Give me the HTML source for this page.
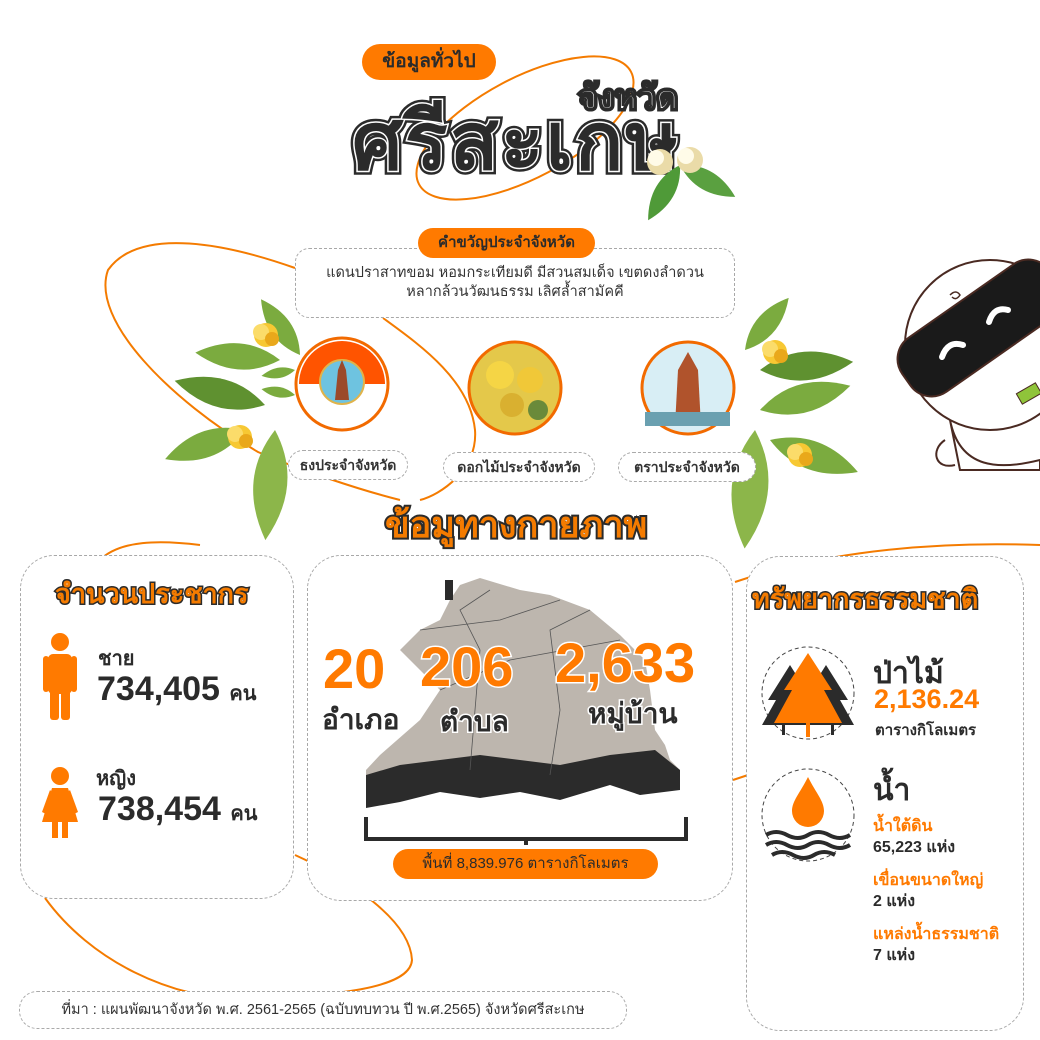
<!DOCTYPE html>
<html><head><meta charset="utf-8">
<style>
*{margin:0;padding:0;box-sizing:border-box}
body{width:1040px;height:1040px;background:#fff;position:relative;overflow:hidden;font-family:"Liberation Sans","Noto Sans CJK SC",sans-serif;color:#2b2b2b}
.a{position:absolute}
.card{position:absolute;border:1.5px dashed #a8a8a8;border-radius:34px;background:#fff}
.pill{position:absolute;border-radius:20px;text-align:center;white-space:nowrap}
.lbl{position:absolute;border:1.5px dashed #aaa;border-radius:16px;background:#fff;text-align:center;font-size:14px;line-height:28px;font-weight:bold;color:#333;white-space:nowrap}
.out{font-weight:bold;color:#f47b00;-webkit-text-stroke:2px #2b2b2b;paint-order:stroke fill;white-space:nowrap}
.dk{font-weight:bold;color:#2b2b2b;white-space:nowrap}
.big{font-weight:bold;color:#ff7a00;-webkit-text-stroke:3px #fff;paint-order:stroke fill;white-space:nowrap}
</style></head><body>

<svg class="a" style="left:0;top:0" width="1040" height="1040">
 <g fill="none" stroke="#f47b00" stroke-width="2">
  <ellipse cx="525" cy="128" rx="120" ry="50" transform="rotate(-28 525 128)"/>
  <path d="M295 268 C230 245 140 225 108 270 C90 320 170 400 258 452 C300 470 360 490 400 500"/>
  <path d="M383 318 C420 345 470 380 475 430 C478 470 440 495 420 500"/>
  <path d="M45 898 C90 960 170 1000 250 1000 C330 995 410 990 412 960 C410 920 350 880 295 855"/>
  <path d="M735 582 C800 560 900 540 1040 545"/>
  <path d="M733 780 L748 775"/>
  <path d="M100 560 C120 540 160 540 200 545"/>
 </g>
</svg>

<!-- title -->
<div class="pill" style="left:362px;top:44px;width:134px;height:36px;background:#ff7a00;font-size:19px;line-height:36px;font-weight:bold;color:#2b2b2b">ข้อมูลทั่วไป</div>
<div class="a" style="left:578px;top:70px;font-size:34px;font-weight:bold;color:#2b2b2b;-webkit-text-stroke:4px #2b2b2b;white-space:nowrap">จังหวัด</div>
<div class="a" style="left:578px;top:70px;font-size:34px;font-weight:bold;color:#fff;-webkit-text-stroke:1px #2b2b2b;white-space:nowrap">จังหวัด</div>
<div class="a" style="left:352px;top:78px;font-size:80px;font-weight:bold;color:#2b2b2b;-webkit-text-stroke:8px #2b2b2b;white-space:nowrap;letter-spacing:2px">ศรีสะเกษ</div>
<div class="a" style="left:352px;top:78px;font-size:80px;font-weight:bold;color:#2b2b2b;-webkit-text-stroke:3px #fff;paint-order:stroke fill;white-space:nowrap;letter-spacing:2px">ศรีสะเกษ</div>

<svg class="a" style="left:0;top:0" width="1040" height="1040">
 <defs>
  <path id="lf" d="M0 0 Q40 -26 85 0 Q40 26 0 0Z"/>
  <g id="fl"><circle r="12" fill="#f7c833"/><circle cx="-5" cy="-3" r="8" fill="#fbdc6a"/><circle cx="6" cy="4" r="7" fill="#e9a81b"/></g>
  <g id="wf"><circle r="13" fill="#eadba8"/><circle cx="-4" cy="-4" r="8" fill="#fffbe8"/></g>
 </defs>
 <!-- title leaves -->
 <use href="#lf" transform="translate(680 165) rotate(120) scale(0.75)" fill="#4f9a38"/>
 <use href="#lf" transform="translate(680 165) rotate(30) scale(0.75)" fill="#5aa040"/>
 <use href="#wf" transform="translate(660 162)"/><use href="#wf" transform="translate(690 160)"/>
 <!-- left cluster -->
 <g fill="#7bab3f">
  <use href="#lf" transform="translate(300 355) rotate(-125) scale(0.8)"/>
  <use href="#lf" transform="translate(280 360) rotate(185) scale(1.0)"/>
  <use href="#lf" transform="translate(265 405) rotate(195) scale(1.1)" fill="#5f9130"/>
  <use href="#lf" transform="translate(245 430) rotate(160) scale(1.0)"/>
  <use href="#lf" transform="translate(275 430) rotate(95) scale(1.3)" fill="#8cb64a"/>
  <use href="#lf" transform="translate(295 370) rotate(170) scale(0.4)"/>
  <use href="#lf" transform="translate(295 395) rotate(190) scale(0.4)"/>
 </g>
 <use href="#fl" transform="translate(266 335)"/><use href="#fl" transform="translate(240 437)"/>
 <!-- right cluster -->
 <g fill="#7bab3f">
  <use href="#lf" transform="translate(745 350) rotate(-50) scale(0.8)"/>
  <use href="#lf" transform="translate(760 370) rotate(-5) scale(1.1)" fill="#5f9130"/>
  <use href="#lf" transform="translate(760 410) rotate(-15) scale(1.1)"/>
  <use href="#lf" transform="translate(770 440) rotate(20) scale(1.1)"/>
  <use href="#lf" transform="translate(755 430) rotate(95) scale(1.4)" fill="#8cb64a"/>
 </g>
 <use href="#fl" transform="translate(775 352)"/><use href="#fl" transform="translate(800 455)"/>
 <!-- robot -->
 <g stroke="#4a2a22" stroke-width="2" fill="#fff">
  <path d="M950 420 C960 470 1000 470 1040 460 L1040 470 L960 470Z"/>
  <circle cx="990" cy="345" r="85"/>
  <path d="M945 440 C930 450 935 470 955 465"/>
  <rect x="890" y="295" width="180" height="66" rx="26" fill="#1a1a1a" transform="rotate(-35 980 328)"/>
 </g>
 <g stroke="#fff" stroke-width="6" fill="none" stroke-linecap="round">
  <path d="M942 357 Q948 340 963 345"/><path d="M989 322 Q994 306 1008 310"/>
 </g>
 <path d="M950 295 q6 -6 10 0 q-4 6 -8 2" fill="none" stroke="#4a2a22" stroke-width="1.5"/>
 <rect x="1018" y="388" width="22" height="12" fill="#8fc43a" stroke="#4a2a22" transform="rotate(-30 1028 394)"/>
</svg>

<!-- motto -->
<div class="pill" style="left:418px;top:228px;width:177px;height:30px;background:#ff7a00;font-size:15px;line-height:30px;font-weight:bold;color:#2b2b2b;z-index:2">คำขวัญประจำจังหวัด</div>
<div class="card" style="left:295px;top:248px;width:440px;height:70px;border-radius:14px;text-align:center;font-size:14.5px;line-height:19px;padding-top:15px;color:#333">แดนปราสาทขอม หอมกระเทียมดี มีสวนสมเด็จ เขตดงลำดวน<br>หลากล้วนวัฒนธรรม เลิศล้ำสามัคคี</div>

<svg class="a" style="left:290px;top:330px" width="460" height="110">
 <circle cx="52" cy="54" r="46" fill="#fff" stroke="#f26a00" stroke-width="3"/>
 <path d="M9 54 A43 43 0 0 1 95 54Z" fill="#ff5400"/>
 <circle cx="52" cy="52" r="22" fill="#6ec3e0" stroke="#e0b34a" stroke-width="2"/>
 <path d="M45 70 L48 40 L52 30 L56 40 L59 70Z" fill="#9b4a2a"/>
 <circle cx="225" cy="58" r="46" fill="#e4c84a" stroke="#f26a00" stroke-width="3"/>
 <circle cx="210" cy="45" r="14" fill="#f5d545"/><circle cx="240" cy="50" r="13" fill="#f0c838"/><circle cx="222" cy="75" r="12" fill="#d9b030"/><circle cx="248" cy="80" r="10" fill="#6a8a3a"/>
 <circle cx="398" cy="58" r="46" fill="#d8eef5" stroke="#f26a00" stroke-width="3"/>
 <path d="M385 96 L388 40 L398 22 L408 40 L411 96Z" fill="#b0532c"/>
 <path d="M355 82 L440 82 L440 96 L355 96Z" fill="#6aa0b0"/>
</svg>
<div class="lbl" style="left:288px;top:450px;width:120px">ธงประจำจังหวัด</div>
<div class="lbl" style="left:443px;top:452px;width:152px">ดอกไม้ประจำจังหวัด</div>
<div class="lbl" style="left:618px;top:452px;width:138px">ตราประจำจังหวัด</div>

<div class="a out" style="left:385px;top:496px;font-size:36px;-webkit-text-stroke:4px #2b2b2b">ข้อมูทางกายภาพ</div>

<!-- left card -->
<div class="card" style="left:20px;top:555px;width:274px;height:344px"></div>
<div class="a out" style="left:55px;top:572px;font-size:27px;-webkit-text-stroke:3px #2b2b2b">จำนวนประชากร</div>
<svg class="a" style="left:40px;top:632px" width="40" height="210">
 <g fill="#ff7a00">
  <circle cx="20" cy="10" r="9"/><rect x="8" y="22" width="24" height="40" rx="5"/><rect x="3" y="24" width="6" height="36" rx="3"/><rect x="31" y="24" width="6" height="36" rx="3"/><rect x="10" y="58" width="9" height="30" rx="3"/><rect x="21" y="58" width="9" height="30" rx="3"/>
  <circle cx="20" cy="144" r="9"/><path d="M12 156 L28 156 L38 190 L2 190Z"/><path d="M10 158 L2 180 L6 182 L14 162Z"/><path d="M30 158 L38 180 L34 182 L26 162Z"/><rect x="12" y="188" width="6" height="18"/><rect x="22" y="188" width="6" height="18"/>
 </g>
</svg>
<div class="a dk" style="left:98px;top:642px;font-size:20px">ชาย</div>
<div class="a dk" style="left:97px;top:670px;font-size:34px">734,405 <span style="font-size:20px">คน</span></div>
<div class="a dk" style="left:96px;top:762px;font-size:20px">หญิง</div>
<div class="a dk" style="left:98px;top:790px;font-size:34px">738,454 <span style="font-size:20px">คน</span></div>

<!-- middle card -->
<div class="card" style="left:307px;top:555px;width:426px;height:346px"></div>
<svg class="a" style="left:360px;top:570px" width="340" height="250">
 <path d="M6 200 L20 185 L60 150 L80 120 L40 80 L60 60 L80 50 L90 30 L100 15 L120 8 L160 20 L190 25 L230 40 L260 65 L285 90 L290 120 L295 160 L305 175 L310 190 L320 200 L320 218 L250 210 L200 220 L160 215 L120 210 L80 215 L40 220 L6 225Z" fill="#bdb6ae"/>
 <path d="M6 205 L40 195 L80 190 L120 185 L160 190 L200 195 L250 185 L295 180 L320 200 L320 220 L280 225 L250 215 L200 230 L160 222 L120 228 L80 222 L40 232 L6 238Z" fill="#2b2b2b"/>
 <g fill="none" stroke="#555" stroke-width="0.8">
  <path d="M110 200 L115 140 L120 80 L100 40 L130 20"/><path d="M190 205 L200 140 L195 100 L190 60 L230 40"/><path d="M80 120 L150 90 L260 70"/><path d="M60 60 L140 50 L200 30"/>
 </g>
 <rect x="85" y="10" width="8" height="20" fill="#2b2b2b"/>
</svg>
<div class="a big" style="left:323px;top:636px;font-size:56px">20</div>
<div class="a big" style="left:420px;top:634px;font-size:56px">206</div>
<div class="a big" style="left:555px;top:630px;font-size:56px">2,633</div>
<div class="a dk" style="left:322px;top:698px;font-size:28px;-webkit-text-stroke:3px #fff;paint-order:stroke fill">อำเภอ</div>
<div class="a dk" style="left:440px;top:700px;font-size:28px;-webkit-text-stroke:3px #fff;paint-order:stroke fill">ตำบล</div>
<div class="a dk" style="left:588px;top:692px;font-size:28px;-webkit-text-stroke:3px #fff;paint-order:stroke fill">หมู่บ้าน</div>
<svg class="a" style="left:360px;top:815px" width="330" height="30"><path d="M6 2 V24 H326 V2 M166 24 V30" fill="none" stroke="#2b2b2b" stroke-width="4"/></svg>
<div class="pill" style="left:393px;top:849px;width:265px;height:30px;background:#ff7a00;font-size:15px;line-height:30px;color:#2b2b2b">พื้นที่ 8,839.976 ตารางกิโลเมตร</div>

<!-- right card -->
<div class="card" style="left:746px;top:556px;width:278px;height:475px"></div>
<div class="a out" style="left:752px;top:577px;font-size:27px;-webkit-text-stroke:3px #2b2b2b">ทรัพยากรธรรมชาติ</div>
<svg class="a" style="left:760px;top:645px" width="100" height="225">
 <circle cx="48" cy="48" r="46" fill="none" stroke="#444" stroke-dasharray="4 3"/>
 <path d="M30 20 L52 55 L44 55 L58 80 L2 80 L16 55 L8 55Z" fill="#2b2b2b"/>
 <path d="M66 20 L88 55 L80 55 L94 80 L38 80 L52 55 L44 55Z" fill="#2b2b2b"/>
 <path d="M48 8 L72 45 L64 45 L82 78 L14 78 L32 45 L24 45Z" fill="#ff7a00"/>
 <rect x="22" y="80" width="3" height="10" fill="#2b2b2b"/><rect x="71" y="80" width="3" height="10" fill="#2b2b2b"/><rect x="46" y="78" width="4" height="14" fill="#ff7a00"/>
 <circle cx="48" cy="170" r="46" fill="none" stroke="#444" stroke-dasharray="4 3"/>
 <path d="M48 132 C40 148 32 156 32 166 A16 16 0 0 0 64 166 C64 156 56 148 48 132Z" fill="#ff7a00"/>
 <g fill="none" stroke="#2b2b2b" stroke-width="4"><path d="M6 190 q10 -6 21 0 t21 0 t21 0 t21 0"/><path d="M6 200 q10 -6 21 0 t21 0 t21 0 t21 0"/><path d="M12 210 q10 -6 21 0 t21 0 t21 0"/></g>
</svg>
<div class="a dk" style="left:873px;top:650px;font-size:30px">ป่าไม้</div>
<div class="a" style="left:874px;top:684px;font-size:27px;font-weight:bold;color:#ff7a00">2,136.24</div>
<div class="a dk" style="left:875px;top:718px;font-size:15px">ตารางกิโลเมตร</div>
<div class="a dk" style="left:873px;top:767px;font-size:30px">น้ำ</div>
<div class="a" style="left:873px;top:814px;font-size:16px;font-weight:bold;color:#ff7a00">น้ำใต้ดิน</div>
<div class="a dk" style="left:873px;top:835px;font-size:16px">65,223 แห่ง</div>
<div class="a" style="left:873px;top:868px;font-size:16px;font-weight:bold;color:#ff7a00">เขื่อนขนาดใหญ่</div>
<div class="a dk" style="left:873px;top:889px;font-size:16px">2 แห่ง</div>
<div class="a" style="left:873px;top:922px;font-size:16px;font-weight:bold;color:#ff7a00">แหล่งน้ำธรรมชาติ</div>
<div class="a dk" style="left:873px;top:943px;font-size:16px">7 แห่ง</div>

<div class="lbl" style="left:19px;top:991px;width:608px;height:38px;line-height:36px;font-size:14.5px;font-weight:normal;border-radius:18px">ที่มา : แผนพัฒนาจังหวัด พ.ศ. 2561-2565 (ฉบับทบทวน ปี พ.ศ.2565) จังหวัดศรีสะเกษ</div>
</body></html>
